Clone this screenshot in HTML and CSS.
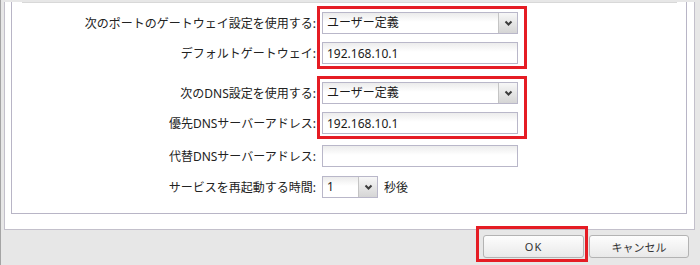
FILE: index.html
```html
<!DOCTYPE html>
<html lang="ja">
<head>
  <meta charset="UTF-8">
  <title>ポート設定</title>
  <link rel="stylesheet" href="styles.css">
</head>
<body>
  <div class="window">
    <div class="panel">
      <div class="inner">
        <div class="rule"></div>

        <div class="group">
          <div class="labels">
            <span class="label">次のポートのゲートウェイ設定を使用する:</span>
            <span class="label">デフォルトゲートウェイ:</span>
          </div>
          <div class="controls mark">
            <div class="select">
              <span class="value">ユーザー定義</span>
              <span class="btn"><svg width="9" height="6" viewBox="0 0 9 6"><path d="M1.5 1.5l3 3 3-3" fill="none" stroke="#3c3c3c" stroke-width="2"/></svg></span>
            </div>
            <input class="field" type="text" value="192.168.10.1">
          </div>
        </div>

        <div class="group second">
          <div class="labels">
            <span class="label">次のDNS設定を使用する:</span>
            <span class="label">優先DNSサーバーアドレス:</span>
          </div>
          <div class="controls mark">
            <div class="select">
              <span class="value">ユーザー定義</span>
              <span class="btn"><svg width="9" height="6" viewBox="0 0 9 6"><path d="M1.5 1.5l3 3 3-3" fill="none" stroke="#3c3c3c" stroke-width="2"/></svg></span>
            </div>
            <input class="field" type="text" value="192.168.10.1">
          </div>
        </div>

        <div class="group plain">
          <div class="labels">
            <span class="label">代替DNSサーバーアドレス:</span>
            <span class="label">サービスを再起動する時間:</span>
          </div>
          <div class="controls">
            <input class="field" type="text" value="">
            <div class="inline">
              <div class="select small">
                <span class="value">1</span>
                <span class="btn"><svg width="9" height="6" viewBox="0 0 9 6"><path d="M1.5 1.5l3 3 3-3" fill="none" stroke="#3c3c3c" stroke-width="2"/></svg></span>
              </div>
              <span class="unit">秒後</span>
            </div>
          </div>
        </div>
      </div>
    </div>

    <div class="footer">
      <div class="ok-mark">
        <button type="button" class="btn-ok">OK</button>
      </div>
      <button type="button" class="btn-cancel">キャンセル</button>
    </div>
  </div>
</body>
</html>
```

FILE: styles.css
```css
body {
  margin: 0;
  background: #e7e7e7;
  font-family: "Noto Sans", "Noto Sans CJK JP", sans-serif;
  font-size: 12px;
  color: #222;
}

.window {
  height: 265px;
  box-sizing: border-box;
  border-left: 1px solid #a4a4a4;
  padding: 0 5px 0 3px;
  overflow: hidden;
}

.panel {
  background: #fff;
  border: 1px solid #c3c0cb;
  border-top: none;
  padding: 0 7px 15px 6px;
}

.inner {
  border: 1px solid #b8b5c6;
  border-top: none;
  padding-bottom: 15px;
}

.rule {
  margin: 2px 9px 0 10px;
  border-top: 1px solid #d8d8d8;
}

.group {
  display: flex;
  margin-top: 3px;
}

.group.second {
  margin-top: 7px;
}

.group.plain {
  margin-top: 6px;
}

.labels {
  width: 305px;
  display: flex;
  flex-direction: column;
  gap: 8px;
  padding-top: 6px;
}

.label {
  height: 22px;
  display: flex;
  align-items: center;
  justify-content: flex-end;
  padding-right: 1px;
  white-space: nowrap;
}

.controls {
  display: flex;
  flex-direction: column;
  gap: 8px;
  padding-left: 5px;
}

.controls.mark {
  border: 3px solid #e51c24;
  padding: 3px 6px 2px 2px;
}

.group.plain .labels {
  padding-top: 0;
  gap: 9px;
}

.group.plain .controls {
  gap: 9px;
}

.select {
  width: 196px;
  height: 22px;
  box-sizing: border-box;
  display: flex;
  border: 1px solid #b9b7c9;
  background: linear-gradient(#ebebeb, #fff 45%);
}

.select .value {
  flex: 1;
  padding-left: 4px;
  line-height: 20px;
  color: #1a1a1a;
}

.select .btn {
  width: 18px;
  display: flex;
  align-items: center;
  justify-content: center;
  border-left: 1px solid #c4c4c4;
  background: linear-gradient(#f7f7f7, #d5d5d5);
}

.select.small {
  width: 56px;
}

.field {
  width: 196px;
  height: 22px;
  box-sizing: border-box;
  margin: 0;
  padding: 0 4px;
  border: 1px solid #b9b7c9;
  background: linear-gradient(#ececec, #fff 45%);
  font-family: inherit;
  font-size: 12px;
  color: #1a1a1a;
  outline: none;
}

.inline {
  display: flex;
  align-items: center;
  gap: 6px;
}

.footer {
  display: flex;
  justify-content: flex-end;
  align-items: flex-start;
  padding: 5px 6px 0 0;
}

.ok-mark {
  margin-top: -9px;
  border: 3px solid #e51c24;
  padding: 6px 1px 1px 4px;
}

.footer button {
  height: 23px;
  box-sizing: border-box;
  border: 1px solid #b3b3b3;
  border-radius: 3px;
  background: linear-gradient(#fdfdfd, #e9e9e9);
  font-family: inherit;
  font-size: 11px;
  color: #333;
  padding: 0;
}

.btn-ok {
  width: 101px;
  letter-spacing: 1px;
}

.btn-cancel {
  width: 100px;
  margin-left: 1px;
}
```
